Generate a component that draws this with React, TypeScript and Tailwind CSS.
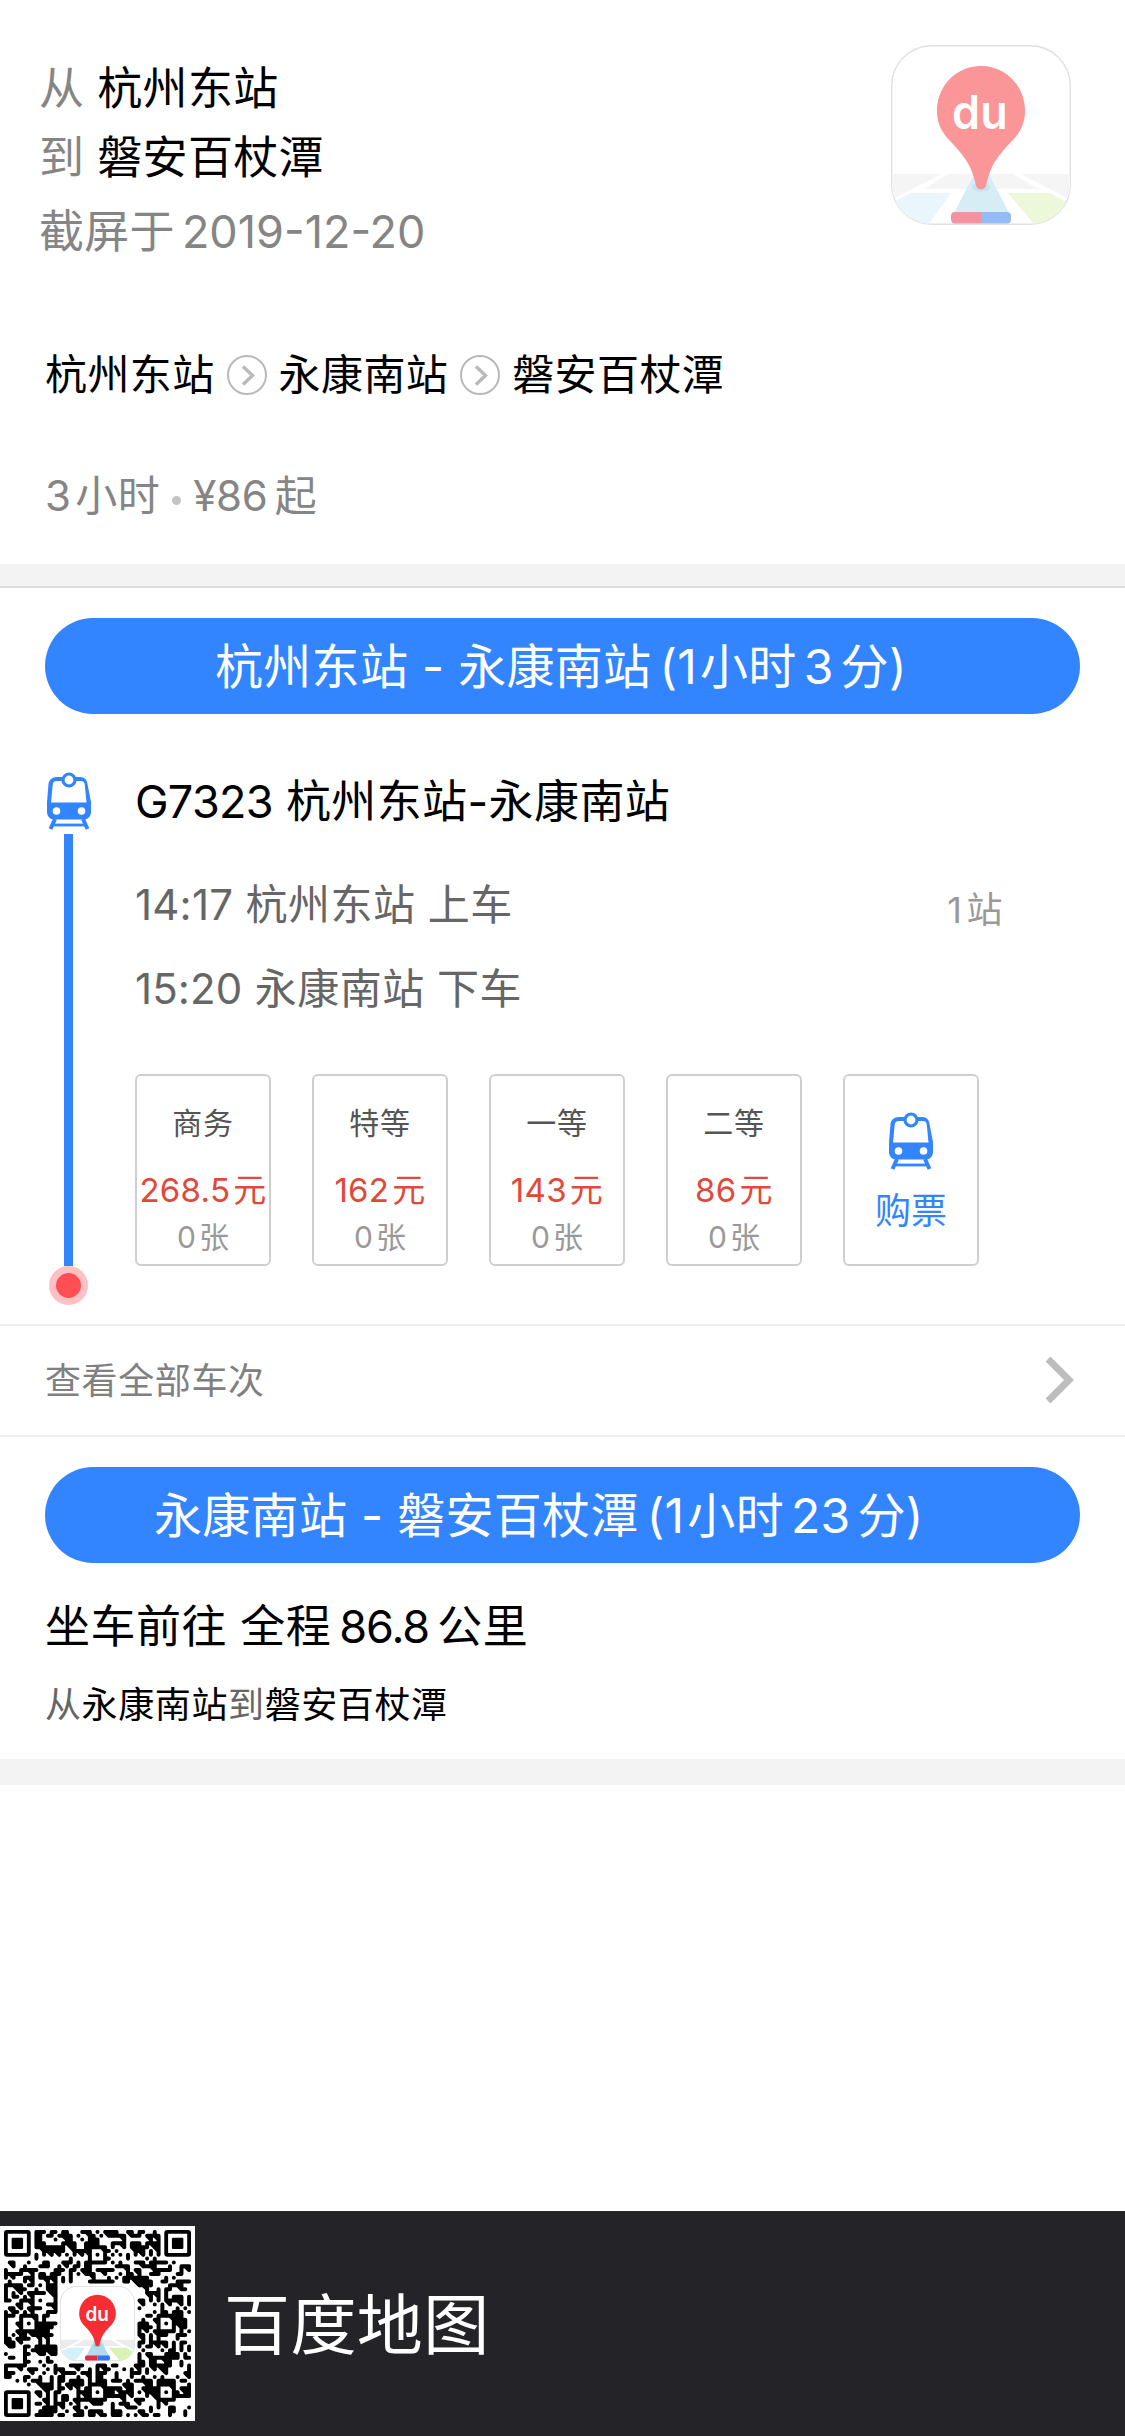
import type { ReactNode } from 'react';

const seats = [
  { name: '商务', price: '268.5', left: 0 },
  { name: '特等', price: '162', left: 0 },
  { name: '一等', price: '143', left: 0 },
  { name: '二等', price: '86', left: 0 },
];

// Baidu Maps app icon
function AppLogo({ className }: { className: string }) {
  return (
    <svg className={className} viewBox="0 0 180 180">
      <defs>
        <clipPath id="tile">
          <rect x="1" y="1" width="178" height="178" rx="39" />
        </clipPath>
      </defs>
      <rect x="0.7" y="0.7" width="178.6" height="178.6" rx="40" fill="#fff" stroke="#c4c4c8" strokeWidth="1.4" />
      <g clipPath="url(#tile)">
        <path d="M0 129H50L0 155ZM58 129H82L75 144H33ZM180 129H130L180 155ZM122 129H98L105 144H147Z" fill="#ececec" />
        <path d="M20 148H60L37 180H0V158Z" fill="#d5f0fb" />
        <path d="M117 148H159L180 160V180H144Z" fill="#daf2b4" />
        <path d="M83 129H98L118 168H63Z" fill="#b1dcec" />
      </g>
      <path d="M64 167H90V178.500H64Q60 178.500 60 174V171Q60 167 64 167Z" fill="#e82843" />
      <path d="M90 167H116Q120 167 120 171V174Q120 178.500 116 178.500H90Z" fill="#2c79ee" />
      <ellipse cx="90" cy="142" rx="9" ry="4.500" fill="#93c6e2" />
      <path
        d="M90 21C65 21 46 41 46 66C46 80 52 89 61 98C72 110 79 118 83 133L85.500 142Q90 147 94.500 142L97 133C101 118 108 110 119 98C128 89 134 80 134 66C134 41 115 21 90 21Z"
        fill="#f62d33"
      />
      <text
        x="61"
        y="83.500"
        fill="#fff"
        fontSize="47"
        fontWeight="600"
        textLength="56"
        lengthAdjust="spacingAndGlyphs"
        fontFamily="Inter, sans-serif"
      >
        du
      </text>
    </svg>
  );
}

function TrainIcon() {
  return (
    <svg className="h-[58px] w-[46px] shrink-0" viewBox="0 0 46 58" fill="none">
      <path
        d="M11 5H34C39 5 41 8 41.500 12L45 30V40C45 44 42 47.500 38 47.500H8C4 47.500 1 44 1 40V30L2.500 12C3 8 6 5 11 5Z"
        fill="#3385ff"
      />
      <path d="M11 9H34C37.500 9 38.500 10.500 38.800 13L40.500 30.500H5L6.700 13C7 10.500 8 9 11 9Z" fill="#fff" />
      <circle cx="23" cy="8" r="6" fill="#fff" stroke="#3385ff" strokeWidth="3.200" />
      <circle cx="10.500" cy="39" r="3.800" fill="#fff" />
      <circle cx="35.500" cy="39" r="3.800" fill="#fff" />
      <path d="M9 47L4.500 57M37 47L41.500 57" stroke="#3385ff" strokeWidth="4" />
      <path d="M7 53H39" stroke="#3385ff" strokeWidth="2.800" />
    </svg>
  );
}

function StepArrow() {
  return (
    <svg className="size-10 shrink-0" viewBox="0 0 40 40" fill="none" stroke="#b9b9b9">
      <circle cx="20" cy="20" r="19" strokeWidth="2" />
      <path d="M16 11.500L25.500 20.500L16 29.500" strokeWidth="3.400" />
    </svg>
  );
}

const QR_SIZE = 49;
const ALIGN = [6, 24, 42];

function inFinder(x: number, y: number) {
  return (x < 8 && y < 8) || (x > 40 && y < 8) || (x < 8 && y > 40);
}

function nearAlign(x: number, y: number) {
  return ALIGN.some((ax) =>
    ALIGN.some((ay) => !inFinder(ax, ay) && Math.abs(ax - x) <= 2 && Math.abs(ay - y) <= 2)
  );
}

function isDark(x: number, y: number) {
  if (x < 0 || y < 0 || x >= QR_SIZE || y >= QR_SIZE) return false;
  if (inFinder(x, y)) return false;
  if (Math.abs(x - 24) < 11 && Math.abs(y - 24) < 11) return false;
  if (nearAlign(x, y)) {
    const ax = ALIGN.find((a) => Math.abs(a - x) <= 2)!;
    const ay = ALIGN.find((a) => Math.abs(a - y) <= 2)!;
    return Math.max(Math.abs(ax - x), Math.abs(ay - y)) !== 1;
  }
  if (x === 6) return y % 2 === 0;
  if (y === 6) return x % 2 === 0;
  let h = Math.imul(x + 11, 374761393) ^ Math.imul(y + 7, 668265263);
  h = Math.imul(h ^ (h >>> 13), 1274126177);
  return ((h ^ (h >>> 16)) & 255) < 136;
}

// Dark modules joined to their right, lower and diagonal neighbours
function qrPath() {
  let d = '';
  for (let y = 0; y < QR_SIZE; y++) {
    for (let x = 0; x < QR_SIZE; x++) {
      if (!isDark(x, y)) continue;
      d += `M${x + 0.5} ${y + 0.5}h0`;
      if (isDark(x + 1, y)) d += 'h1h-1';
      if (isDark(x, y + 1)) d += 'v1v-1';
      if (isDark(x + 1, y + 1) && isDark(x + 1, y)) d += 'l1 1';
    }
  }
  return d;
}

function QrCode() {
  return (
    <div className="relative size-[195px] bg-white p-1">
      <svg className="size-[187px]" viewBox="0 0 49 49">
        <path d={qrPath()} stroke="#000" strokeWidth="1.05" strokeLinecap="round" strokeLinejoin="round" fill="none" />
        {[[0, 0], [42, 0], [0, 42]].map(([x, y]) => (
          <g key={`${x}-${y}`}>
            <rect x={x + 0.5} y={y + 0.5} width="6" height="6" rx="0.3" fill="#fff" stroke="#000" />
            <rect x={x + 2} y={y + 2} width="3" height="3" rx="0.3" />
          </g>
        ))}
      </svg>
      <AppLogo className="absolute top-[60px] left-[60px] size-[75px]" />
    </div>
  );
}

function SegmentPill({ children, className }: { children: ReactNode; className: string }) {
  return (
    <div
      className={`mx-[45px] flex h-24 items-center rounded-full bg-[#3385ff] pt-px text-[48px] tracking-[0.3px] whitespace-pre text-white ${className}`}
    >
      {children}
    </div>
  );
}

export default function App() {
  return (
    <div className="flex h-[2436px] w-[1125px] flex-col overflow-hidden bg-white font-['Inter','Noto_Sans_CJK_SC',sans-serif] leading-none text-black">
      {/* Header */}
      <header className="flex h-[330px] justify-between pt-[45px] pr-[54px] pl-[39px] text-[45px] tracking-[0.3px]">
        <div className="flex flex-col whitespace-pre">
          <p className="h-[69px] leading-[87px]">
            <span className="mr-[13px] text-[#858585]">从</span>杭州东站
          </p>
          <p className="h-[69px] leading-[87px]">
            <span className="mr-[13px] text-[#858585]">到</span>磐安百杖潭
          </p>
          <p className="leading-[97px] text-[#858585]">
            截屏于<span className="ml-[7px] tracking-[0px]">2019-12-20</span>
          </p>
        </div>
        <AppLogo className="size-[180px] opacity-50" />
      </header>

      {/* Route summary */}
      <section className="h-[234px] pl-[45px] text-[42px] tracking-[0.4px]">
        <div className="flex h-[90px] items-center">
          <span>杭州东站</span>
          <span className="mr-3 ml-3"><StepArrow /></span>
          <span>永康南站</span>
          <span className="mr-3 ml-3"><StepArrow /></span>
          <span>磐安百杖潭</span>
        </div>
        <div className="mt-[30px] flex h-[92px] items-center text-[#858585]">
          <span>3</span>
          <span className="ml-1">小时</span>
          <span className="mt-2 mr-3 ml-3 size-[9px] rounded-full bg-[#c4c4c4]" />
          <span className="tracking-[-0.2px]">¥86</span>
          <span className="ml-[7px]">起</span>
        </div>
      </section>
      <div className="h-[24px] shrink-0 border-b-2 border-[#dcdcdc] bg-[#f3f3f3]" />

      {/* Train segment */}
      <section className="flex h-[736px] shrink-0 flex-col pt-[30px]">
        <SegmentPill className="pl-[170px]">
          杭州东站 - 永康南站<span className="ml-[8px]">(1</span><span className="ml-[3px]">小时</span><span className="mx-[7px]">3</span>分)
        </SegmentPill>
        <div className="mt-[58px] flex pl-[45px]">
          <div className="flex w-[47px] flex-col items-center">
            <TrainIcon />
            <div className="mt-1 h-[432px] w-[9px] bg-[#3385ff]" />
            <div className="size-[39px] rounded-full border-[7px] border-[#ffc0c4] bg-[#ff4f54]" />
          </div>
          <div className="ml-[43px] flex-1 whitespace-pre">
            <h2 className="h-[60px] text-[45px] leading-[60px] tracking-[0.4px]">
              <span className="tracking-[-0.7px]">G7323</span> 杭州东站-永康南站
            </h2>
            <div className="mt-[43px] flex h-[60px] items-center justify-between pr-[122px] text-[42px] tracking-[0.5px] text-[#666]">
              <span><span className="tracking-[0.2px]">14:17</span> 杭州东站 上车</span>
              <span className="mt-[9px] text-[36px] text-[#999]">1<span className="ml-1">站</span></span>
            </div>
            <p className="mt-6 h-[60px] text-[42px] leading-[60px] tracking-[0.5px] text-[#666]">
              <span className="tracking-[0.1px]">15:20</span> 永康南站 下车
            </p>
            <div className="mt-[55px] flex gap-[41px]">
              {seats.map((seat) => (
                <div
                  key={seat.name}
                  className="flex h-[192px] w-[136px] flex-col items-center rounded-md border-2 border-[#cfcfcf]"
                >
                  <span className="mt-8 text-[30px] tracking-[0.8px] text-[#555]">{seat.name}</span>
                  <span className="mt-[36px] text-[33px] tracking-[0.3px] text-[#e1493a]">
                    {seat.price}<span className="ml-[3px]">元</span>
                  </span>
                  <span className="mt-[15px] text-[30px] text-[#999]">
                    {seat.left}<span className="ml-[3px]">张</span>
                  </span>
                </div>
              ))}
              <div className="flex h-[192px] w-[136px] flex-col items-center rounded-md border-2 border-[#cfcfcf] pt-9">
                <TrainIcon />
                <span className="mt-[23px] text-[36px] text-[#3385ff]">购票</span>
              </div>
            </div>
          </div>
        </div>
      </section>

      {/* All trains */}
      <div className="flex h-[113px] shrink-0 items-center justify-between border-y-2 border-[#eeeeee] pr-[51px] pl-[45px]">
        <span className="text-[36px] tracking-[0.6px] text-[#808080]">查看全部车次</span>
        <svg className="mb-0.5 h-[46px] w-[30px]" viewBox="0 0 30 46" fill="none" stroke="#bdbdbd" strokeWidth="7">
          <path d="M4 2L25 23L4 44" />
        </svg>
      </div>

      {/* Ride segment */}
      <section className="h-[322px] shrink-0 pt-[30px]">
        <SegmentPill className="pl-[109px]">
          永康南站 - 磐安百杖潭<span className="ml-[8px]">(1</span><span className="ml-[3px]">小时</span><span className="mx-[7px]">23</span>分)
        </SegmentPill>
        <h2 className="mt-[33px] pl-[45px] text-[45px] leading-[62px] tracking-[0.5px] whitespace-pre">
          坐车前往 全程<span className="mx-[8px] tracking-[-1px]">86.8</span>公里
        </h2>
        <p className="mt-[23px] pl-[45px] text-[36px] leading-[48px] tracking-[0.6px]">
          <span className="text-[#666]">从</span>永康南站<span className="text-[#666]">到</span>磐安百杖潭
        </p>
      </section>
      <div className="h-[26px] shrink-0 bg-[#f3f3f3]" />

      {/* Footer */}
      <footer className="mt-auto flex h-[225px] items-center bg-[#232328]">
        <QrCode />
        <span className="ml-[29px] pt-0.5 text-[66px] tracking-[0.4px] text-white">百度地图</span>
      </footer>
    </div>
  );
}
